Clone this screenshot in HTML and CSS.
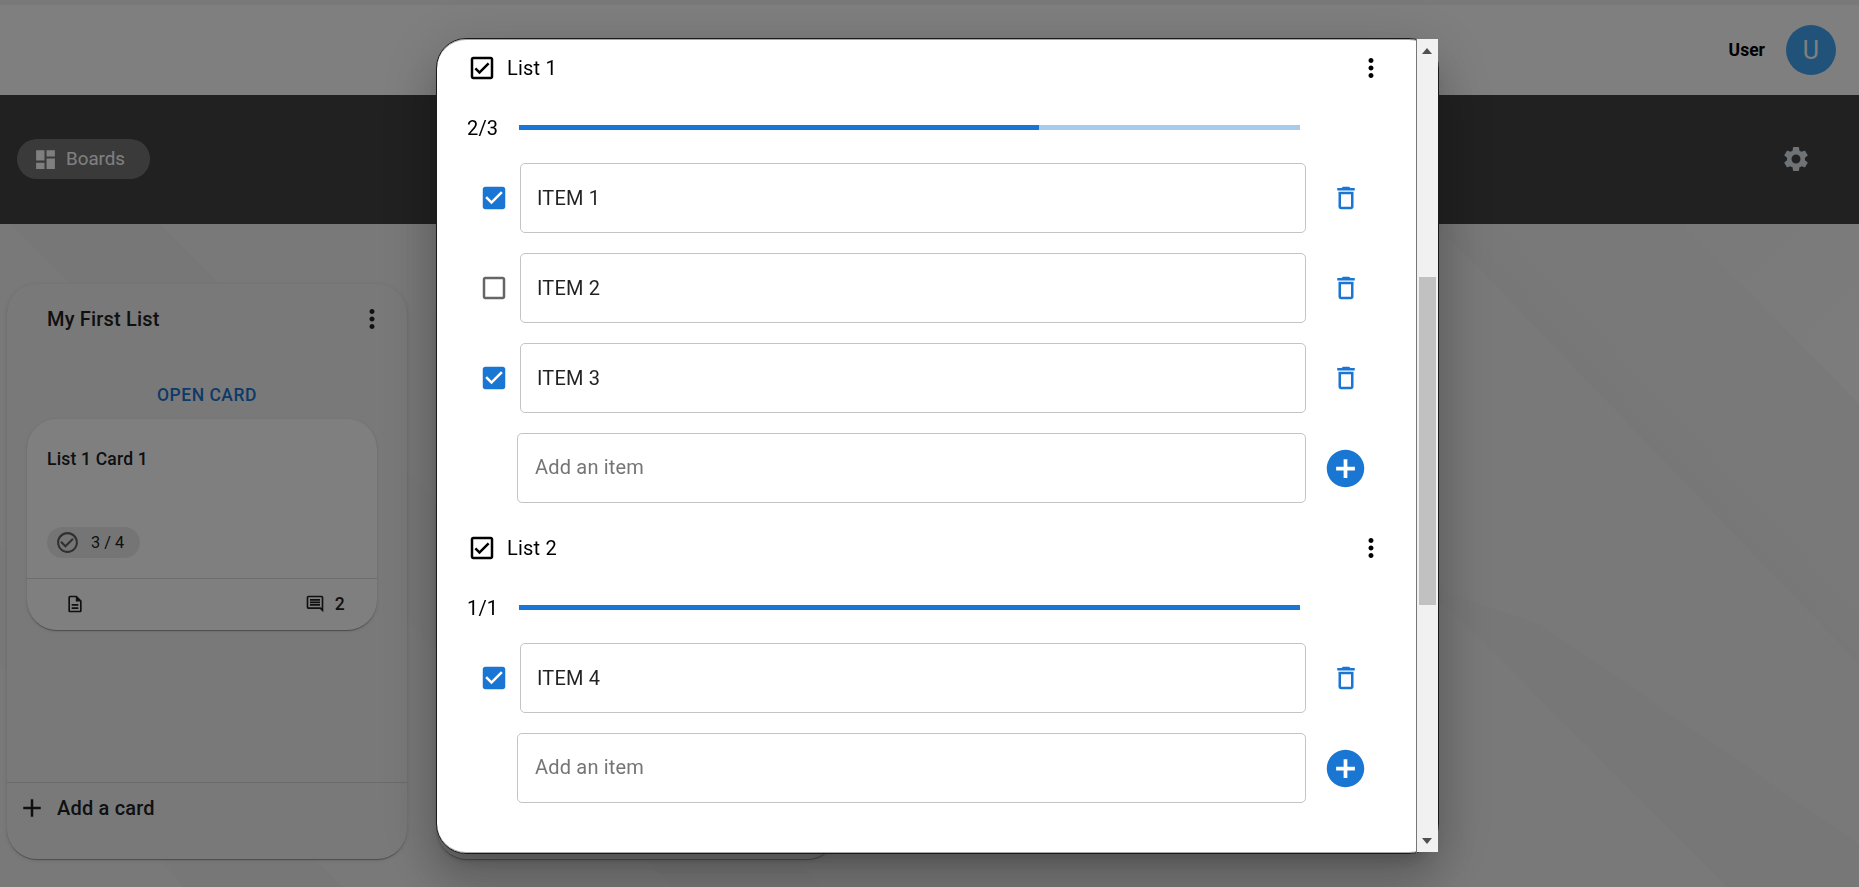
FILE: index.html
```html
<!DOCTYPE html>
<html lang="en">
<head>
<meta charset="utf-8">
<title>Boards</title>
<link rel="stylesheet" href="styles.css">
</head>
<body>
<svg class="defs" width="0" height="0">
  <symbol id="more" viewBox="0 0 24 24"><path d="M12 8c1.1 0 2-.9 2-2s-.9-2-2-2-2 .9-2 2 .9 2 2 2zm0 2c-1.1 0-2 .9-2 2s.9 2 2 2 2-.9 2-2-.9-2-2-2zm0 6c-1.1 0-2 .9-2 2s.9 2 2 2 2-.9 2-2-.9-2-2-2z"/></symbol>
  <symbol id="dashboard" viewBox="0 0 24 24"><path d="M3 13h8V3H3v10zm0 8h8v-6H3v6zm10 0h8V11h-8v10zm0-18v6h8V3h-8z"/></symbol>
  <symbol id="settings" viewBox="0 0 24 24"><path d="M19.14 12.94c.04-.3.06-.61.06-.94 0-.32-.02-.64-.07-.94l2.03-1.58c.18-.14.23-.41.12-.61l-1.92-3.32c-.12-.22-.37-.29-.59-.22l-2.39.96c-.5-.38-1.03-.7-1.62-.94l-.36-2.54c-.04-.24-.24-.41-.48-.41h-3.84c-.24 0-.43.17-.47.41l-.36 2.54c-.59.24-1.13.57-1.62.94l-2.39-.96c-.22-.08-.47 0-.59.22L2.74 8.87c-.12.21-.08.47.12.61l2.03 1.58c-.05.3-.09.63-.09.94s.02.64.07.94l-2.03 1.58c-.18.14-.23.41-.12.61l1.92 3.32c.12.22.37.29.59.22l2.39-.96c.5.38 1.03.7 1.62.94l.36 2.54c.05.24.24.41.48.41h3.84c.24 0 .44-.17.47-.41l.36-2.54c.59-.24 1.13-.56 1.62-.94l2.39.96c.22.08.47 0 .59-.22l1.92-3.32c.12-.22.07-.47-.12-.61l-2.01-1.58zM12 15.6c-1.98 0-3.6-1.62-3.6-3.6s1.62-3.6 3.6-3.6 3.6 1.62 3.6 3.6-1.62 3.6-3.6 3.6z"/></symbol>
  <symbol id="done" viewBox="0 0 24 24"><path d="M16.59 7.58 10 14.17l-3.59-3.58L5 12l5 5 8-8zM12 2C6.48 2 2 6.48 2 12s4.48 10 10 10 10-4.48 10-10S17.52 2 12 2zm0 18c-4.42 0-8-3.58-8-8s3.58-8 8-8 8 3.58 8 8-3.58 8-8 8z"/></symbol>
  <symbol id="doc" viewBox="0 0 24 24"><path d="M8 16h8v2H8zm0-4h8v2H8zm6-10H6c-1.1 0-2 .9-2 2v16c0 1.1.89 2 1.99 2H18c1.1 0 2-.9 2-2V8l-6-6zm4 18H6V4h7v5h5v11z"/></symbol>
  <symbol id="comment" viewBox="0 0 24 24"><path d="M21.99 4c0-1.1-.89-2-1.99-2H4c-1.1 0-2 .9-2 2v12c0 1.1.9 2 2 2h14l4 4-.01-18zM20 4v13.17L18.83 16H4V4h16zM6 12h12v2H6zm0-3h12v2H6zm0-3h12v2H6z"/></symbol>
  <symbol id="add" viewBox="0 0 24 24"><path d="M19 13h-6v6h-2v-6H5v-2h6V5h2v6h6v2z"/></symbol>
  <symbol id="add-circle" viewBox="0 0 24 24"><path d="M12 2C6.48 2 2 6.48 2 12s4.48 10 10 10 10-4.48 10-10S17.52 2 12 2zm5 11h-4v4h-2v-4H7v-2h4V7h2v4h4v2z"/></symbol>
  <symbol id="list" viewBox="0 0 24 24"><path d="M19 3H5c-1.1 0-2 .9-2 2v14c0 1.1.9 2 2 2h14c1.1 0 2-.9 2-2V5c0-1.1-.9-2-2-2zm0 16H5V5h14v14zM17.99 9l-1.41-1.42-6.59 6.59-2.58-2.57-1.42 1.41 4 3.99z"/></symbol>
  <symbol id="checked" viewBox="0 0 24 24"><path d="M19 3H5c-1.11 0-2 .9-2 2v14c0 1.1.89 2 2 2h14c1.11 0 2-.9 2-2V5c0-1.1-.89-2-2-2zm-9 14l-5-5 1.41-1.41L10 14.17l7.59-7.59L19 8l-9 9z"/></symbol>
  <symbol id="unchecked" viewBox="0 0 24 24"><path d="M19 5v14H5V5h14m0-2H5c-1.1 0-2 .9-2 2v14c0 1.1.9 2 2 2h14c1.1 0 2-.9 2-2V5c0-1.1-.9-2-2-2z"/></symbol>
  <symbol id="trash" viewBox="0 0 24 24"><path d="M16 9v10H8V9h8m-1.5-6h-5l-1 1H5v2h14V4h-3.5l-1-1zM18 7H6v12c0 1.1.9 2 2 2h8c1.1 0 2-.9 2-2V7z"/></symbol>
</svg>

<div class="page">
  <header class="header">
    <span class="user-name">User</span>
    <span class="avatar">U</span>
  </header>
  <nav class="toolbar">
    <span class="boards"><svg class="i25"><use href="#dashboard"/></svg>Boards</span>
    <svg class="i30 gear"><use href="#settings"/></svg>
  </nav>
  <main class="board">
    <svg class="rays" viewBox="0 0 1859 663" preserveAspectRatio="none">
      <defs>
        <linearGradient id="corner" x1="0" y1="0" x2="1" y2="1"><stop offset="0" stop-color="#f4f4f4"/><stop offset="1" stop-color="#f9f9f9"/></linearGradient>
        <linearGradient id="band" gradientUnits="userSpaceOnUse" x1="1640" y1="130" x2="1575" y2="190"><stop offset="0" stop-color="#eee" stop-opacity="0"/><stop offset="1" stop-color="#ececec"/></linearGradient>
      </defs>
      <polygon points="1683,0 1859,0 1859,180" fill="url(#corner)"/>
      <polygon points="1434,0 1560,0 1859,320 1859,440 1487,53" fill="url(#band)"/>
      <polygon points="1420,360 1463,398 1727,663 1859,663 1859,620 1540,400" fill="#efefef"/>
      <polygon points="10,0 160,0 823,663 673,663" fill="#efefef"/>
      <polygon points="0,320 343,663 183,663 0,440" fill="#efefef"/>
    </svg>
    <section class="column">
      <div class="column-head"><h2>My First List</h2><svg class="i30"><use href="#more"/></svg></div>
      <div class="column-body">
        <button class="open">OPEN CARD</button>
        <article class="card">
          <div class="card-body">
            <h3>List 1 Card 1</h3>
            <span class="count"><svg class="i25"><use href="#done"/></svg>3 / 4</span>
          </div>
          <footer class="card-foot">
            <svg class="i20"><use href="#doc"/></svg>
            <span class="comments"><svg class="i20"><use href="#comment"/></svg>2</span>
          </footer>
        </article>
      </div>
      <div class="column-foot"><svg class="i30"><use href="#add"/></svg>Add a card</div>
    </section>
    <section class="column"></section>
  </main>
</div>

<div class="backdrop">
  <div class="modal">
    <div class="content">
      <section class="checklist">
        <div class="list-head"><svg class="i30"><use href="#list"/></svg><span class="list-name">List 1</span><svg class="i30"><use href="#more"/></svg></div>
        <div class="progress"><span class="ratio">2/3</span><div class="bar"><div class="fill" style="width:66.6%"></div></div></div>
        <div class="row"><svg class="i30 blue"><use href="#checked"/></svg><div class="field">ITEM 1</div><svg class="i30 blue action"><use href="#trash"/></svg></div>
        <div class="row"><svg class="i30 grey"><use href="#unchecked"/></svg><div class="field">ITEM 2</div><svg class="i30 blue action"><use href="#trash"/></svg></div>
        <div class="row"><svg class="i30 blue"><use href="#checked"/></svg><div class="field">ITEM 3</div><svg class="i30 blue action"><use href="#trash"/></svg></div>
        <div class="row new"><div class="field hint">Add an item</div><svg class="i45 blue"><use href="#add-circle"/></svg></div>
      </section>
      <section class="checklist">
        <div class="list-head"><svg class="i30"><use href="#list"/></svg><span class="list-name">List 2</span><svg class="i30"><use href="#more"/></svg></div>
        <div class="progress"><span class="ratio">1/1</span><div class="bar"><div class="fill" style="width:100%"></div></div></div>
        <div class="row"><svg class="i30 blue"><use href="#checked"/></svg><div class="field">ITEM 4</div><svg class="i30 blue action"><use href="#trash"/></svg></div>
        <div class="row new"><div class="field hint">Add an item</div><svg class="i45 blue"><use href="#add-circle"/></svg></div>
      </section>
    </div>
    <div class="seam"></div>
    <div class="scrollbar">
      <svg class="arrow" viewBox="0 0 10 6"><path d="M0 6 5 0l5 6z"/></svg>
      <div class="thumb"></div>
      <svg class="arrow" viewBox="0 0 10 6"><path d="M0 0h10L5 6z"/></svg>
    </div>
  </div>
</div>
</body>
</html>
```
FILE: styles.css
```css
* { box-sizing: border-box; }
body {
  margin: 0;
  width: 1859px;
  height: 887px;
  overflow: hidden;
  font-family: Roboto, "Liberation Sans", sans-serif;
  font-size: 20px;
  line-height: 30px;
  letter-spacing: 0.00938em;
  color: #000;
}
svg { display: block; flex: none; fill: currentColor; }
h2, h3 { margin: 0; font-weight: 500; }
.defs { position: absolute; }
.i20 { width: 20px; height: 20px; }
.i25 { width: 25px; height: 25px; }
.i30 { width: 30px; height: 30px; }
.i45 { width: 45px; height: 45px; }
.blue { color: #1976d2; }
.grey { color: #666; }

.page { height: 887px; display: flex; flex-direction: column; background: #f2f2f2; }
.header {
  height: 90px;
  margin-top: 5px;
  padding-right: 23px;
  display: flex;
  align-items: center;
  justify-content: flex-end;
  gap: 21px;
  background: #fff;
}
.user-name { font-size: 17.5px; font-weight: 700; letter-spacing: 0; }
.avatar {
  width: 50px;
  height: 50px;
  border-radius: 50%;
  background: #42a5f5;
  color: #fff;
  font-size: 25px;
  line-height: 52px;
  text-align: center;
}
.toolbar {
  height: 129px;
  padding: 0 48px 1px 17px;
  display: flex;
  align-items: center;
  justify-content: space-between;
  background: #424242;
}
.boards {
  width: 133px;
  height: 40px;
  padding-left: 16px;
  display: flex;
  align-items: center;
  gap: 8px;
  border-radius: 20px;
  background: #757575;
  color: #fff;
  font-size: 18.75px;
  letter-spacing: 0;
}
.gear { color: #dfe6ea; }
.board {
  position: relative;
  flex: 1;
  padding: 60px 7px 28px;
  display: flex;
  gap: 30px;
}
.rays { position: absolute; inset: 0; width: 100%; height: 100%; }
.column {
  position: relative;
  width: 400px;
  height: 575px;
  display: flex;
  flex-direction: column;
  border-radius: 30px;
  background: #f3f3f3;
  box-shadow: 0 2px 1px -1px rgba(0,0,0,.2), 0 1px 1px rgba(0,0,0,.14), 0 1px 4px rgba(0,0,0,.12);
}
.column-head {
  height: 71px;
  padding: 0 20px 1px 40px;
  display: flex;
  align-items: center;
  justify-content: space-between;
  color: #212121;
}
.column-head h2 { font-size: 20px; }
.column-body { flex: 1; padding: 21px 30px 0 20px; display: flex; flex-direction: column; }
.open {
  height: 43px;
  padding: 0 0 5px 10px;
  border: 0;
  background: none;
  color: #1976d2;
  font: 500 17.5px/30px Roboto, sans-serif;
  letter-spacing: 0.02857em;
}
.card {
  height: 211px;
  display: flex;
  flex-direction: column;
  border-radius: 30px;
  background: #fff;
  color: #212121;
  box-shadow: 0 2px 1px -1px rgba(0,0,0,.2), 0 1px 1px rgba(0,0,0,.14), 0 1px 4px rgba(0,0,0,.12);
}
.card-body {
  height: 159px;
  padding: 25px 20px 20px;
  display: flex;
  flex-direction: column;
  justify-content: space-between;
  align-items: flex-start;
}
.card-body h3 { font-size: 17.5px; }
.count {
  width: 93px;
  height: 31px;
  padding-left: 8px;
  display: flex;
  align-items: center;
  gap: 11px;
  border-radius: 16px;
  background: #ebebeb;
  font-size: 16.25px;
  letter-spacing: 0;
}
.count svg { color: #616161; }
.card-foot {
  flex: 1;
  padding: 0 32px 2px 38px;
  display: flex;
  align-items: center;
  justify-content: space-between;
  border-top: 1px solid #dadada;
  font-size: 17.5px;
  font-weight: 500;
}
.comments { display: flex; align-items: center; gap: 10px; }
.column-foot {
  height: 77px;
  padding: 10px 0 0 10px;
  display: flex;
  gap: 10px;
  border-top: 1px solid #d5d5d5;
  font-weight: 500;
  color: #212121;
}

.backdrop { position: fixed; inset: 0; padding: 38px 0 0 436px; background: rgba(0,0,0,.5); }
.modal {
  width: 1003px;
  height: 816px;
  display: flex;
  border: 1px solid #1a1a1a;
  border-radius: 30px;
  background: #fff;
  box-shadow:
    inset 0 1px #a8a8a8, inset 0 -1px #a8a8a8,
    0 14px 19px -9px rgba(0,0,0,.2), 0 30px 48px 4px rgba(0,0,0,.14), 0 11px 58px 10px rgba(0,0,0,.12);
}
.content { width: 979px; padding-top: 14px; }
.checklist { height: 480px; }
.list-head { height: 30px; padding: 0 30px; display: flex; align-items: center; }
.list-name { flex: 1; padding-left: 10px; }
.progress { height: 80px; padding: 30px 116px 0 30px; display: flex; align-items: flex-start; }
.ratio { width: 52px; }
.bar { flex: 1; height: 5px; margin-top: 12px; background: #a7caed; }
.fill { height: 5px; background: #1976d2; }
.row { height: 70px; margin-bottom: 20px; padding-left: 42px; display: flex; align-items: center; }
.field {
  width: 786px;
  height: 70px;
  margin-left: 11px;
  padding-left: 16px;
  border: 1px solid #c4c4c4;
  border-radius: 5px;
  line-height: 69px;
  color: rgba(0,0,0,.87);
}
.action { margin-left: 25px; }
.new { padding-left: 80px; }
.new .field { width: 789px; margin-left: 0; padding-left: 17px; line-height: 67px; }
.new svg { margin-left: 17px; }
.new .hint { color: #757575; }
.seam { width: 1px; background: #777; }
.scrollbar {
  width: 21px;
  height: 813px;
  display: flex;
  flex-direction: column;
  align-items: center;
  justify-content: space-between;
  padding: 9px 0 8px;
  background: #f1f1f1;
}
.arrow { width: 10px; height: 6px; margin-right: 1px; fill: #505050; }
.thumb { width: 17px; height: 328px; margin-bottom: 10px; background: #c1c1c1; }
```
